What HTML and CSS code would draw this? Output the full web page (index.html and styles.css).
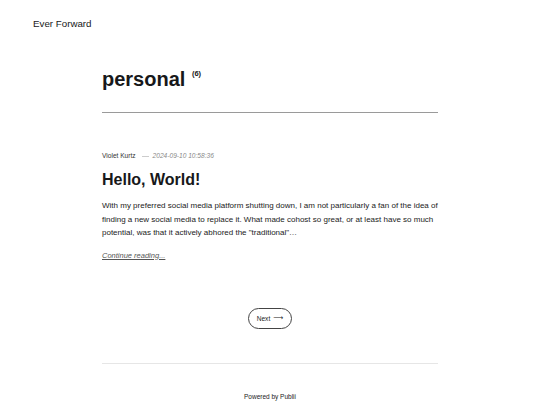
FILE: index.html
```html
<!DOCTYPE html>
<html lang="en">
<head>
<meta charset="utf-8">
<title>personal - Ever Forward</title>
<link rel="stylesheet" href="styles.css">
</head>
<body>
<header class="site-header">
  <a class="logo" href="#">Ever Forward</a>
</header>
<main class="wrap">
  <div class="page-head">
    <h1 class="page-title">personal <sup class="count">(6)</sup></h1>
  </div>
  <article class="post">
    <div class="meta">
      <span class="author">Violet Kurtz</span>
      <span class="sep"></span>
      <time class="date">2024-09-10 10:58:36</time>
    </div>
    <h2 class="post-title">Hello, World!</h2>
    <p class="excerpt">With my preferred social media platform shutting down, I am not particularly a fan of the idea of finding a new social media to replace it. What made cohost so great, or at least have so much potential, was that it actively abhored the "traditional"…</p>
    <a class="more" href="#">Continue reading...</a>
  </article>
  <nav class="pager">
    <a class="next" href="#">Next <span class="arrow">⟶</span></a>
  </nav>
</main>
<footer class="site-footer">
  <div class="footer-inner">Powered by Publii</div>
</footer>
</body>
</html>
```
FILE: styles.css
```css
* { box-sizing: border-box; }
html, body { margin: 0; padding: 0; }
body {
  font-family: "Liberation Sans", Arial, sans-serif;
  color: #17181a;
  background: #fff;
  width: 540px;
  height: 405px;
  overflow: hidden;
}
a { color: inherit; }
.site-header {
  padding: 18px 0 0 33px;
  height: 40px;
}
.logo {
  font-size: 9.75px;
  text-decoration: none;
  line-height: 12px;
  display: block;
}
.wrap {
  width: 336px;
  margin: 0 auto;
}
.page-head {
  padding-top: 25px;
  border-bottom: 1px solid #9a9a9a;
  padding-bottom: 19px;
}
.page-title {
  margin: 0;
  font-size: 20px;
  line-height: 28px;
  font-weight: 700;
}
.count {
  font-size: 7.5px;
  vertical-align: top;
  position: relative;
  top: -5px;
  margin-left: 1px;
}
.post {
  padding-top: 39px;
}
.meta {
  display: flex;
  align-items: center;
  font-size: 6.6px;
  line-height: 8px;
  color: #333;
}
.sep {
  display: inline-block;
  width: 7px;
  height: 1px;
  background: #ccc;
  margin: 0 4px 0 6px;
}
.date {
  font-style: italic;
  color: #888;
}
.post-title {
  margin: 10px 0 0;
  font-size: 16px;
  line-height: 20px;
  font-weight: 700;
}
.excerpt {
  margin: 9px 0 0;
  font-size: 8px;
  line-height: 13.5px;
  color: #222;
}
.more {
  display: inline-block;
  margin-top: 11px;
  font-size: 7.5px;
  font-style: italic;
  color: #555;
  line-height: 10px;
}
.pager {
  display: flex;
  justify-content: center;
  padding-top: 46px;
}
.next {
  display: inline-flex;
  align-items: center;
  justify-content: center;
  gap: 3px;
  width: 44px;
  height: 21px;
  border: 1px solid #444;
  border-radius: 11px;
  font-size: 6.6px;
  text-decoration: none;
  color: #222;
}
.arrow {
  font-family: "DejaVu Sans", sans-serif;
  font-size: 7px;
  line-height: 1;
}
.site-footer {
  width: 336px;
  margin: 34px auto 0;
  border-top: 1px solid #e6e6e6;
}
.footer-inner {
  text-align: center;
  font-size: 6.5px;
  color: #222;
  padding-top: 29px;
}
```
